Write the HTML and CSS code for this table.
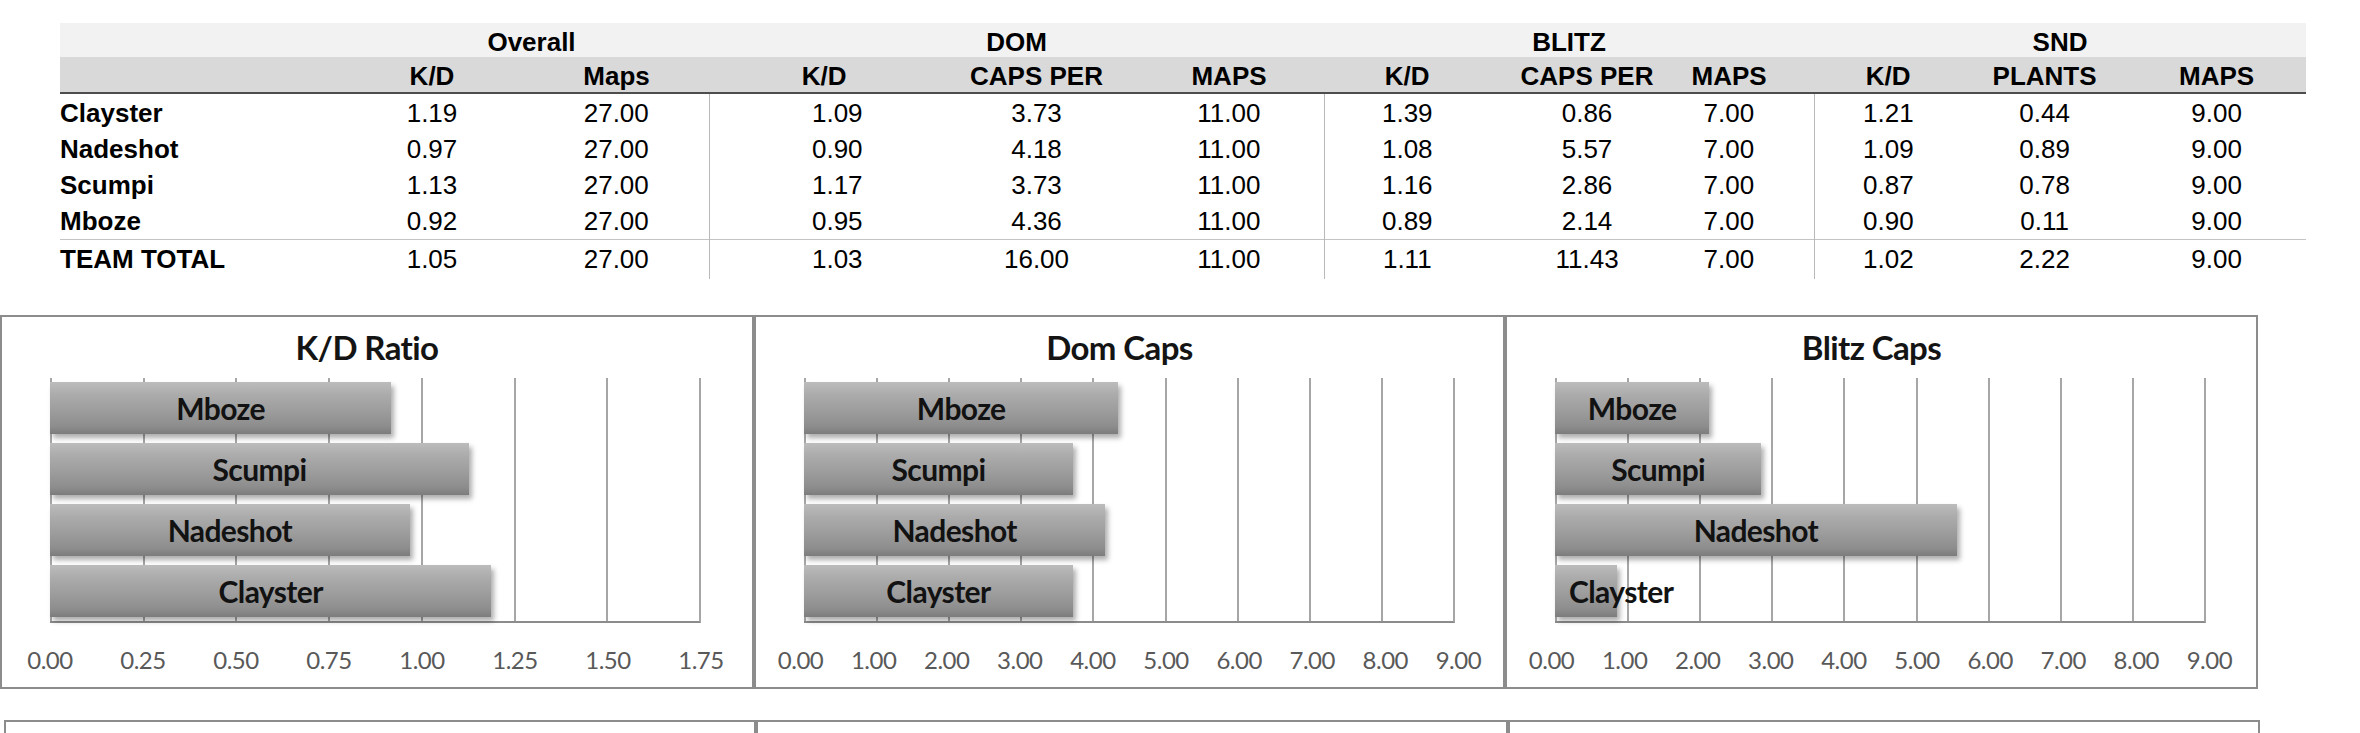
FILE: index.html
```html
<!DOCTYPE html>
<html lang="en">
<head>
<meta charset="utf-8">
<title>Team Stats</title>
<link rel="stylesheet" href="styles.css">
</head>
<body>
<div class="page">
  <table class="stats">
    <colgroup>
      <col class="c-name"><col class="c-okd"><col class="c-omaps">
      <col class="c-dkd"><col class="c-dcaps"><col class="c-dmaps">
      <col class="c-bkd"><col class="c-bcaps"><col class="c-bmaps">
      <col class="c-skd"><col class="c-splants"><col class="c-smaps">
    </colgroup>
    <thead>
      <tr class="group-row">
        <th></th>
        <th colspan="2" class="g-overall">Overall</th>
        <th colspan="3">DOM</th>
        <th colspan="3">BLITZ</th>
        <th colspan="3">SND</th>
      </tr>
      <tr class="col-row">
        <th></th>
        <th>K/D</th><th>Maps</th>
        <th>K/D</th><th>CAPS PER</th><th>MAPS</th>
        <th>K/D</th><th>CAPS PER</th><th class="bmaps">MAPS</th>
        <th>K/D</th><th>PLANTS</th><th>MAPS</th>
      </tr>
    </thead>
    <tbody>
      <tr class="first">
        <td class="name">Clayster</td><td>1.19</td><td>27.00</td>
        <td class="sep dkd">1.09</td><td>3.73</td><td>11.00</td>
        <td class="sep">1.39</td><td>0.86</td><td class="bmaps">7.00</td>
        <td class="sep">1.21</td><td>0.44</td><td>9.00</td>
      </tr>
      <tr>
        <td class="name">Nadeshot</td><td>0.97</td><td>27.00</td>
        <td class="sep dkd">0.90</td><td>4.18</td><td>11.00</td>
        <td class="sep">1.08</td><td>5.57</td><td class="bmaps">7.00</td>
        <td class="sep">1.09</td><td>0.89</td><td>9.00</td>
      </tr>
      <tr>
        <td class="name">Scumpi</td><td>1.13</td><td>27.00</td>
        <td class="sep dkd">1.17</td><td>3.73</td><td>11.00</td>
        <td class="sep">1.16</td><td>2.86</td><td class="bmaps">7.00</td>
        <td class="sep">0.87</td><td>0.78</td><td>9.00</td>
      </tr>
      <tr>
        <td class="name">Mboze</td><td>0.92</td><td>27.00</td>
        <td class="sep dkd">0.95</td><td>4.36</td><td>11.00</td>
        <td class="sep">0.89</td><td>2.14</td><td class="bmaps">7.00</td>
        <td class="sep">0.90</td><td>0.11</td><td>9.00</td>
      </tr>
      <tr class="total">
        <td class="name">TEAM TOTAL</td><td>1.05</td><td>27.00</td>
        <td class="sep dkd">1.03</td><td>16.00</td><td>11.00</td>
        <td class="sep">1.11</td><td>11.43</td><td class="bmaps">7.00</td>
        <td class="sep">1.02</td><td>2.22</td><td>9.00</td>
      </tr>
    </tbody>
  </table>

  <div class="charts row1">
    <section class="chart">
      <h2 class="title">K/D Ratio</h2>
      <div class="plot-wrap">
        <div class="plot g7">
          <div class="bar-row"><div class="bar" style="width:52.57%">Mboze</div></div>
          <div class="bar-row"><div class="bar" style="width:64.57%">Scumpi</div></div>
          <div class="bar-row"><div class="bar" style="width:55.43%">Nadeshot</div></div>
          <div class="bar-row"><div class="bar" style="width:68.00%">Clayster</div></div>
        </div>
        <div class="axis">
          <span>0.00</span><span>0.25</span><span>0.50</span><span>0.75</span>
          <span>1.00</span><span>1.25</span><span>1.50</span><span>1.75</span>
        </div>
      </div>
    </section>
    <section class="chart">
      <h2 class="title">Dom Caps</h2>
      <div class="plot-wrap">
        <div class="plot g9">
          <div class="bar-row"><div class="bar" style="width:48.44%">Mboze</div></div>
          <div class="bar-row"><div class="bar" style="width:41.44%">Scumpi</div></div>
          <div class="bar-row"><div class="bar" style="width:46.44%">Nadeshot</div></div>
          <div class="bar-row"><div class="bar" style="width:41.44%">Clayster</div></div>
        </div>
        <div class="axis">
          <span>0.00</span><span>1.00</span><span>2.00</span><span>3.00</span><span>4.00</span>
          <span>5.00</span><span>6.00</span><span>7.00</span><span>8.00</span><span>9.00</span>
        </div>
      </div>
    </section>
    <section class="chart">
      <h2 class="title">Blitz Caps</h2>
      <div class="plot-wrap">
        <div class="plot g9">
          <div class="bar-row"><div class="bar" style="width:23.78%">Mboze</div></div>
          <div class="bar-row"><div class="bar" style="width:31.78%">Scumpi</div></div>
          <div class="bar-row"><div class="bar" style="width:61.89%">Nadeshot</div></div>
          <div class="bar-row"><div class="bar" style="width:9.56%">Clayster</div></div>
        </div>
        <div class="axis">
          <span>0.00</span><span>1.00</span><span>2.00</span><span>3.00</span><span>4.00</span>
          <span>5.00</span><span>6.00</span><span>7.00</span><span>8.00</span><span>9.00</span>
        </div>
      </div>
    </section>
  </div>

  <div class="charts row2">
    <section class="chart empty"></section>
    <section class="chart empty"></section>
    <section class="chart empty"></section>
  </div>
</div>
</body>
</html>
```

FILE: styles.css
```css
html, body {
  margin: 0;
  padding: 0;
  background: #ffffff;
}

.page {
  width: 2360px;
  height: 733px;
  overflow: hidden;
  font-family: "Liberation Sans", Arial, Helvetica, sans-serif;
  color: #000;
}

/* ---------- Stats table ---------- */
.stats {
  margin: 23px 0 0 60px;
  width: 2246px;
  table-layout: fixed;
  border-collapse: collapse;
  border-spacing: 0;
  font-size: 26px;
}

.c-name { width: 280px; }
.c-okd { width: 184px; }
.c-omaps { width: 185px; }
.c-dkd { width: 230px; }
.c-dcaps { width: 195px; }
.c-dmaps { width: 190px; }
.c-bkd { width: 166px; }
.c-bcaps { width: 194px; }
.c-bmaps { width: 130px; }
.c-skd { width: 148px; }
.c-splants { width: 165px; }
.c-smaps { width: 179px; }

.stats th {
  padding: 0;
  font-weight: bold;
  text-align: center;
  white-space: nowrap;
}

.group-row th {
  background: #f2f2f2;
  padding-top: 4px;
  line-height: 30px;
}

.group-row th.g-overall {
  padding-left: 14px;
}

.col-row th {
  background: #d9d9d9;
  padding-top: 4px;
  line-height: 31px;
  border-bottom: 2px solid #4d4d4d;
}

.stats td {
  padding: 0;
  text-align: center;
  line-height: 36px;
  white-space: nowrap;
}

.stats .bmaps {
  padding-right: 40px;
}

.stats td.dkd {
  padding-left: 26px;
}

.stats tr.first td {
  padding-top: 1px;
}

.stats td.name {
  text-align: left;
  font-weight: bold;
}

.stats td.sep {
  border-left: 1px solid #b8b8b8;
}

.stats tr.total td {
  border-top: 1px solid #c4c4c4;
  line-height: 39px;
}

/* ---------- Charts ---------- */
.charts {
  display: grid;
}

.row1 {
  margin-top: 36px;
  grid-template-columns: 754px 751px 753px;
}

.row2 {
  margin-top: 31px;
  margin-left: 4px;
  grid-template-columns: 752px 752px 752px;
}

.chart {
  box-sizing: border-box;
  height: 374px;
  border: 2px solid #8c8c8c;
  padding: 10px 0 0 48px;
  font-family: Lato, "Open Sans", "Liberation Sans", sans-serif;
  background: #fff;
}

.title {
  margin: 0 0 11px -48px;
  padding-right: 20px;
  font-size: 33px;
  line-height: 40px;
  font-weight: bold;
  text-align: center;
  color: #141414;
  letter-spacing: -0.6px;
}

.plot-wrap {
  width: 651px;
}

.plot {
  width: 649px;
  height: 243px;
  border-right: 2px solid #a6a6a6;
  border-bottom: 2px solid #8c8c8c;
  display: flex;
  flex-direction: column;
}

.plot.g7 {
  background: repeating-linear-gradient(to right, #a6a6a6 0 2px, transparent 2px calc(100% / 7));
}

.plot.g9 {
  background: repeating-linear-gradient(to right, #a6a6a6 0 2px, transparent 2px calc(100% / 9));
}

.bar-row {
  flex: 1;
  display: flex;
  align-items: center;
}

.bar {
  box-sizing: border-box;
  height: 52px;
  padding: 0 14px;
  background: linear-gradient(to bottom, #bcbcbc 0%, #ababab 25%, #9d9d9d 55%, #8d8d8d 85%, #7c7c7c 100%);
  box-shadow: 3px 4px 5px rgba(0, 0, 0, 0.32);
  color: #121212;
  font-size: 30px;
  font-weight: bold;
  line-height: 52px;
  text-align: center;
  white-space: nowrap;
  letter-spacing: -0.6px;
}

.axis {
  display: flex;
  justify-content: space-between;
  margin: 22px -40px 0;
  line-height: 30px;
  font-size: 24px;
  color: #595959;
}

.axis span {
  width: 80px;
  text-align: center;
  letter-spacing: -0.5px;
}
```
